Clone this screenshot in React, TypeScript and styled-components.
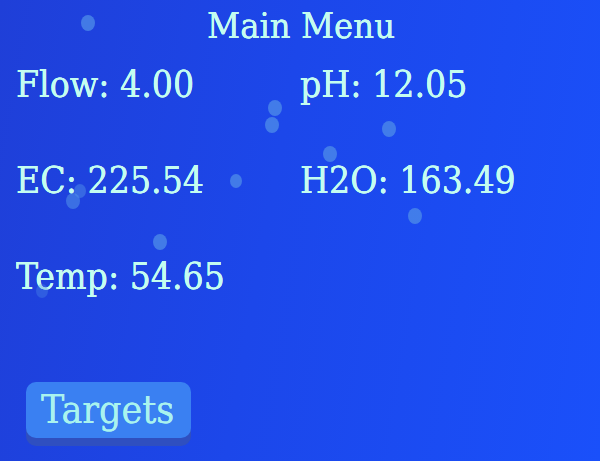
import React from "react";
import styled, { createGlobalStyle } from "styled-components";

const Global = createGlobalStyle`
  html, body { margin: 0; padding: 0; }
  body { width: 600px; height: 461px; overflow: hidden; }
`;

const Screen = styled.div`
  position: relative;
  width: 600px;
  height: 461px;
  overflow: hidden;
  box-sizing: border-box;
  background: linear-gradient(100deg, #1f3fd8 0%, #1c47ea 45%, #1a50fa 100%);
  font-family: "DejaVu Serif Condensed", "DejaVu Serif", serif;
  font-stretch: condensed;
  color: #c4fdf0;
  text-shadow: 0 0 0.6px #c4fdf0, 0 0 0.6px #c4fdf0;
  display: flex;
  flex-direction: column;
  padding: 5px 0 0 16px;
`;

const Title = styled.div`
  text-align: center;
  font-size: 36px;
  line-height: 42px;
  margin-left: -16px;
  padding-left: 2px;
`;

const Grid = styled.div`
  display: grid;
  grid-template-columns: 284px 1fr;
  grid-auto-rows: 96px;
  margin-top: 16px;
`;

const Reading = styled.div`
  font-size: 37px;
  line-height: 44px;
  white-space: nowrap;
`;

const Footer = styled.div`
  margin-top: auto;
  padding: 0 0 23px 10px;
`;

const Button = styled.div`
  width: 165px;
  height: 56px;
  box-sizing: border-box;
  border-radius: 10px;
  background: #3a80f2;
  box-shadow: 0 8px 0 #2f4fc0;
  color: #a9f3ee;
  text-shadow: 0 0 0.6px #a9f3ee;
  font-size: 39px;
  line-height: 56px;
  padding-left: 15px;
`;

const Bubble = styled.div<{ $x: number; $y: number; $r: number; $o?: number }>`
  position: absolute;
  left: ${(p) => p.$x - p.$r}px;
  top: ${(p) => p.$y - p.$r}px;
  width: ${(p) => p.$r * 2}px;
  height: ${(p) => p.$r * 2.3}px;
  border-radius: 50%;
  background: #4f8ee8;
  opacity: ${(p) => p.$o ?? 0.75};
`;

const bubbles = [
  { x: 88, y: 22, r: 7 },
  { x: 275, y: 107, r: 7 },
  { x: 272, y: 124, r: 7 },
  { x: 389, y: 128, r: 7 },
  { x: 330, y: 153, r: 7 },
  { x: 236, y: 180, r: 6 },
  { x: 73, y: 200, r: 7, o: 0.6 },
  { x: 80, y: 190, r: 6, o: 0.5 },
  { x: 415, y: 215, r: 7 },
  { x: 160, y: 241, r: 7 },
  { x: 42, y: 290, r: 6, o: 0.35 },
];

export default function App() {
  return (
    <>
      <Global />
      <Screen>
        {bubbles.map((b, i) => (
          <Bubble key={i} $x={b.x} $y={b.y} $r={b.r} $o={b.o} />
        ))}
        <Title>Main Menu</Title>
        <Grid>
          <Reading>Flow: 4.00</Reading>
          <Reading>pH: 12.05</Reading>
          <Reading>EC: 225.54</Reading>
          <Reading>H2O: 163.49</Reading>
          <Reading>Temp: 54.65</Reading>
        </Grid>
        <Footer>
          <Button>Targets</Button>
        </Footer>
      </Screen>
    </>
  );
}
